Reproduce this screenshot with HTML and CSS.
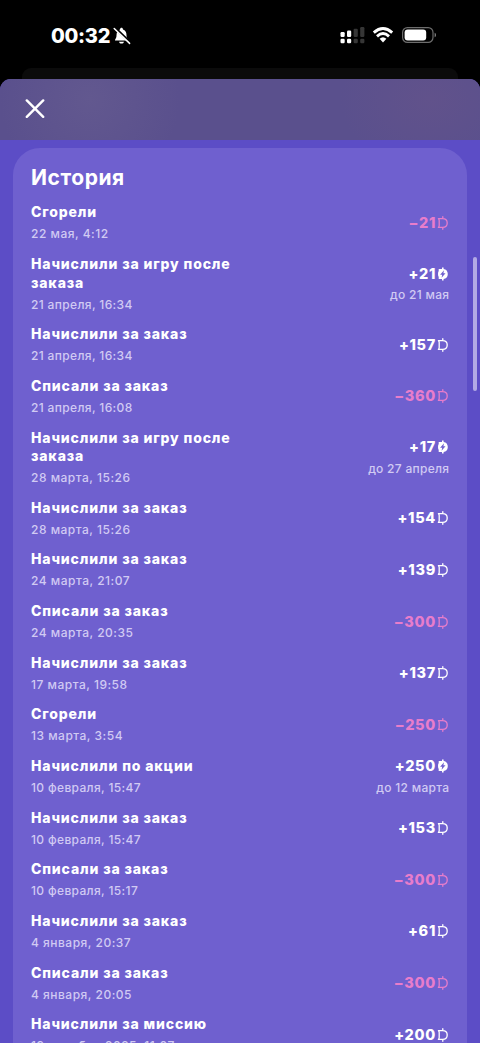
FILE: index.html
```html
<!DOCTYPE html>
<html lang="ru">
<head>
<meta charset="utf-8">
<title>История</title>
<link rel="stylesheet" href="styles.css">
</head>
<body>
<svg class="defs" aria-hidden="true">
  <symbol id="coin" viewBox="0 0 13 16"><path d="M2.4 3.6H6.6C9.5 3.6 11.2 5.3 11.2 8S9.5 12.4 6.6 12.4H2.4Q3.2 11.6 3.2 10.4V5.6Q3.2 4.4 2.4 3.6ZM6.8 1.7V3.4M6.8 12.6V14.3" fill="none" stroke="currentColor" stroke-width="1.3" stroke-linejoin="round" stroke-linecap="round"/></symbol>
  <symbol id="bolt" viewBox="0 0 13 16"><path d="M6 2.9V1.5H7.6V2.9C10.2 3.2 11.8 5.2 11.8 8S10.2 12.8 7.6 13.1V14.5H6V13.1H3.2Q2.2 13.1 2.7 12V11Q2 9.8 2 8T2.7 5V4Q2.2 2.9 3.2 2.9Z" fill="currentColor"/><path d="M8 4.3 4.1 8.7H6.2L5.6 11.7 9.5 7.3H7.4Z" fill="#6f60cf"/></symbol>
</svg>
<div class="screen">
  <header class="status">
    <div class="clock">00:32
      <svg class="bell" width="18" height="18" viewBox="0 0 18 18"><path d="M3 13.6C3 11.8 4.5 11.6 4.5 8.2 4.5 5 6 3.2 8 2.5 8 .3 11 .3 11 2.5 13.2 3.2 14.5 5 14.5 8.2 14.5 11.6 16.2 11.8 16.2 13.6ZM7 14.7H12C11.5 17.2 7.5 17.2 7 14.7Z" fill="#fff" transform="translate(-1 0)"/><path d="M1.6.6 17.4 15.8" stroke="#000" stroke-width="2.8"/><path d="M1.2 1.5 16.6 16.4" stroke="#fff" stroke-width="1.5" stroke-linecap="round"/></svg>
    </div>
    <svg class="indicators" width="98" height="20" viewBox="0 0 98 20"><g fill="#fff"><rect x="2.5" y="7" width="4.2" height="5" rx="1.2"/><rect x="9" y="5.5" width="4.2" height="6.5" rx="1.2"/><rect x="2.5" y="13.8" width="4.2" height="4.4" rx="1.2"/><rect x="9" y="13.8" width="4.2" height="4.4" rx="1.2"/></g><g fill="#363636"><rect x="15.6" y="3.8" width="4.2" height="8.2" rx="1.2"/><rect x="22.2" y="2" width="4.2" height="10" rx="1.2"/><rect x="15.6" y="13.8" width="4.2" height="4.4" rx="1.2"/><rect x="22.2" y="13.8" width="4.2" height="4.4" rx="1.2"/></g><g fill="none" stroke="#fff" stroke-width="2.9"><path d="M35.8 7.6Q45 -.5 54.2 7.6M39 11.3Q45 5.9 51 11.3"/></g><path d="M41.6 13.8Q45 10.8 48.4 13.8L45 17.4Z" fill="#fff"/><rect x="64.6" y="2.6" width="30.4" height="14.8" rx="4.8" fill="none" stroke="#6d6d6d" stroke-width="1.2"/><rect x="66.6" y="4.6" width="21.6" height="10.8" rx="3" fill="#fff"/><path d="M96.6 7.7Q98.1 8.2 98.1 10T96.6 12.3Z" fill="#777"/></svg>
  </header>
  <div class="behind"></div>
  <main class="sheet">
    <div class="toolbar"><svg class="close" width="20" height="20" viewBox="0 0 20 20"><path d="M1.8 1.4 18.2 17.8M18.2 1.4 1.8 17.8" stroke="#fff" stroke-width="2.4" stroke-linecap="round"/></svg></div>
    <section class="card">
      <h1>История</h1>
      <ul class="history" id="history"></ul>
    </section>
    <div class="scrollbar"></div>
  </main>
</div>
<script src="history.js"></script>
</body>
</html>
```
FILE: styles.css
```css
* { box-sizing: border-box; }
body { margin: 0; background: #000; color: #fff; font-family: Inter, "Noto Sans", sans-serif; }
.defs { position: absolute; width: 0; height: 0; }
.screen { height: 1043px; overflow: hidden; display: flex; flex-direction: column; }
.status { height: 68px; flex: none; display: flex; justify-content: space-between; padding: 25px 44px 0 51px; }
.clock { display: flex; align-items: flex-start; gap: 3px; font-size: 20px; line-height: 22px; font-weight: 800; letter-spacing: -.3px; }
.bell { margin-top: 2px; }
.behind { height: 11px; flex: none; margin: 0 22px; background: #0b0b0b; border-radius: 9px 9px 0 0; }
.sheet { position: relative; flex: 1; min-height: 0; overflow: hidden; border-radius: 11px 11px 0 0; background: #5c4dc6; }
.toolbar { height: 61px; padding: 20px 25px; background: radial-gradient(ellipse 90px 90px at 90px 20px, #62588f, transparent), radial-gradient(ellipse 90px 70px at 430px 20px, #61528b, transparent), #5a508d; }
.close { display: block; }
.card { height: 960px; margin: 8px 13px 0; padding: 17px 18px 0; border-radius: 27px 27px 0 0; background: #6f60cf; }
h1 { margin: 0; font-size: 21px; line-height: 26px; font-weight: 700; letter-spacing: .55px; }
.history { margin: 12.3px 0 0; padding: 0; list-style: none; display: flex; flex-direction: column; gap: 12.65px; }
.row { display: flex; align-items: center; justify-content: space-between; }
.info { width: 220px; }
.name { font-size: 14px; line-height: 18.65px; font-weight: 800; letter-spacing: .86px; }
.date, .until { font-size: 12px; line-height: 16px; font-weight: 500; letter-spacing: .28px; color: #d1caf3; }
.date { margin-top: 4.35px; letter-spacing: .5px; white-space: nowrap; }
.date.wide { letter-spacing: .35px; }
.amount { display: flex; align-items: center; justify-content: flex-end; font-size: 14.5px; line-height: 18px; font-weight: 800; letter-spacing: .7px; }
.amount.spent { color: #e87dcb; }
.until { margin-top: 4.35px; margin-right: -.3px; }
.coin { width: 13px; height: 16px; }
.scrollbar { position: absolute; top: 178px; right: 3px; width: 4px; height: 134px; border-radius: 2px; background: #b2a9e5; }
```
FILE: history.js
```js
const entries = [
  ["Сгорели", "22 мая, 4:12", "−21"],
  ["Начислили за игру после заказа", "21 апреля, 16:34", "+21", "до 21 мая"],
  ["Начислили за заказ", "21 апреля, 16:34", "+157"],
  ["Списали за заказ", "21 апреля, 16:08", "−360"],
  ["Начислили за игру после заказа", "28 марта, 15:26", "+17", "до 27 апреля"],
  ["Начислили за заказ", "28 марта, 15:26", "+154"],
  ["Начислили за заказ", "24 марта, 21:07", "+139"],
  ["Списали за заказ", "24 марта, 20:35", "−300"],
  ["Начислили за заказ", "17 марта, 19:58", "+137"],
  ["Сгорели", "13 марта, 3:54", "−250"],
  ["Начислили по акции", "10 февраля, 15:47", "+250", "до 12 марта"],
  ["Начислили за заказ", "10 февраля, 15:47", "+153"],
  ["Списали за заказ", "10 февраля, 15:17", "−300"],
  ["Начислили за заказ", "4 января, 20:37", "+61"],
  ["Списали за заказ", "4 января, 20:05", "−300"],
  ["Начислили за миссию", "19 декабря 2025, 11:07", "+200"]
];
document.getElementById("history").innerHTML = entries.map(([name, date, sum, until]) => `
  <li class="row">
    <div class="info"><div class="name">${name}</div><div class="date${/апреля|февраля/.test(date) ? " wide" : ""}">${date}</div></div>
    <div class="value">
      <div class="amount ${sum[0] === "+" ? "" : "spent"}">${sum}<svg class="coin"><use href="#${until ? "bolt" : "coin"}"/></svg></div>
      ${until ? `<div class="until">${until}</div>` : ""}
    </div>
  </li>`).join("");
```
